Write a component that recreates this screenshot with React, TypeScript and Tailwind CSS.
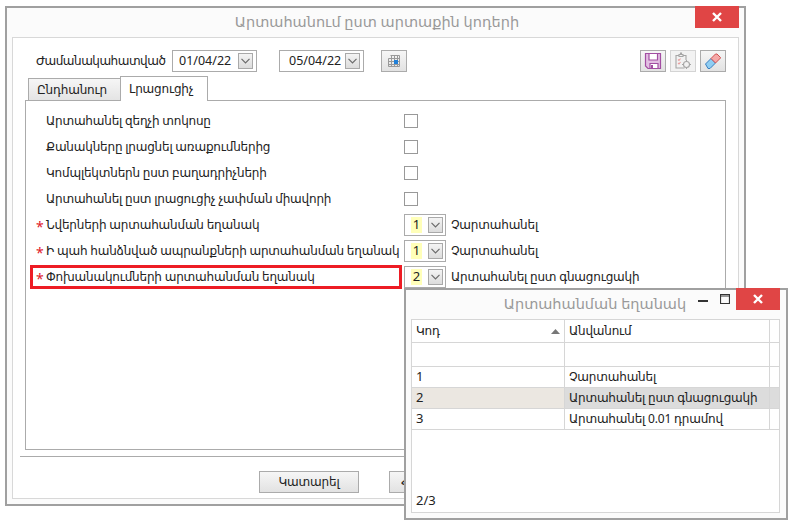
const font = 'font-["Noto_Sans","DejaVu_Sans",sans-serif]'
const hy = 'text-[12px] tracking-[-0.2px] whitespace-nowrap'

function Chevron() {
  return (
    <svg width="9" height="6" viewBox="0 0 9 6" fill="none" stroke="#6b6b6b" strokeWidth="1.2">
      <path d="M0.5 0.8 L4.5 4.8 L8.5 0.8" />
    </svg>
  )
}

function DropBtn() {
  return (
    <span className="flex h-[16px] w-[15px] shrink-0 items-center justify-center border border-[#a9a9a9] bg-gradient-to-b from-[#f4f4f4] to-[#dcdcdc]">
      <Chevron />
    </span>
  )
}

function CloseBtn({ className }: { className: string }) {
  return (
    <div className={className}>
      <svg width="10" height="10" viewBox="0 0 10 10" stroke="#fff" strokeWidth="2.4"><path d="M1 1 L9 9 M9 1 L1 9" /></svg>
    </div>
  )
}

function CodeSelect({ value, text }: { value: string; text: string }) {
  return (
    <div className="flex items-center">
      <div className="flex h-[22px] w-[42px] items-center border border-[#ababab] bg-white pl-[6px]">
        <span className="flex h-[16px] w-[11px] items-center justify-center bg-[#ffffb9] text-[13px]">{value}</span>
        <span className="ml-[6px]"><DropBtn /></span>
      </div>
      <span className={`ml-[5px] ${hy}`}>{text}</span>
    </div>
  )
}

function Row({ label, star, children }: { label: string; star?: boolean; children: React.ReactNode }) {
  return (
    <div className="relative flex h-[26px] items-center">
      {star && <span className="absolute left-[10px] top-[4px] text-[14px] text-[#e0202a]">*</span>}
      <span className={`w-[378px] pl-[20px] ${hy}`}>{label}</span>
      {children}
    </div>
  )
}

function Check() {
  return <span className="block h-[14px] w-[14px] border border-[#999] bg-white" />
}

function ToolBtn({ children, muted }: { children: React.ReactNode; muted?: boolean }) {
  return (
    <span className={muted ? 'flex h-[22px] w-[26px] items-center justify-center border border-[#d4d4d4] bg-[#f2f2f2]' : 'flex h-[22px] w-[26px] items-center justify-center border border-[#ababab] bg-gradient-to-b from-[#f6f6f6] to-[#e2e2e2]'}>
      {children}
    </span>
  )
}

function DateField({ value, wide }: { value: string; wide?: boolean }) {
  return (
    <div className={wide ? 'flex h-[22px] w-[85px] items-center justify-between border border-[#ababab] bg-white pl-[9px] pr-[3px]' : 'flex h-[22px] w-[85px] items-center justify-between border border-[#ababab] bg-white pl-[6px] pr-[3px]'}>
      <span className="text-[12.5px]">{value}</span>
      <DropBtn />
    </div>
  )
}

function PopupRow({ code, name, selected }: { code: string; name: string; selected?: boolean }) {
  return (
    <div className="flex h-[21px] border-b border-[#d6d6d6]">
      <span className={selected ? 'flex w-[153px] items-center border-r border-[#d6d6d6] bg-[#ebe7e1] pl-[4px] text-[13px]' : 'flex w-[153px] items-center border-r border-[#d6d6d6] pl-[4px] text-[13px]'}>{code}</span>
      <span className={selected ? `flex w-[205px] items-center border-r border-[#d6d6d6] bg-[#dcdcdc] pl-[4px] ${hy}` : `flex w-[205px] items-center border-r border-[#d6d6d6] pl-[4px] ${hy}`}>{name}</span>
      <span className={selected ? 'flex-1 bg-[#dcdcdc]' : 'flex-1'} />
    </div>
  )
}

export default function App() {
  return (
    <div className={`relative h-[523px] w-[792px] overflow-hidden bg-white text-[#222] ${font}`}>
      {/* main dialog */}
      <div className="ml-[5px] mt-[6px] h-[500px] w-[741px] border-2 border-[#a0a0a0] bg-[#fbfbfb]">
        <div className="flex h-[29px] items-start">
          <div className="flex h-[27px] flex-1 items-center justify-center whitespace-nowrap pl-[52px] text-[14.5px] text-[#999]">Արտահանում ըստ արտաքին կոդերի</div>
          <CloseBtn className="mr-[5px] -mt-[2px] flex h-[22px] w-[44px] items-center justify-center bg-[#e04545]" />
        </div>
        <div className="mx-[5px] h-[462px] border border-[#d8d8d8] bg-white pl-[12px] pr-[12px]">
          <div className="flex h-[34px] items-end pl-[11px]">
            <span className="flex h-[22px] w-[136px] items-center whitespace-nowrap text-[12px] tracking-[-0.5px]">Ժամանակահատված</span>
            <DateField value="01/04/22" />
            <span className="ml-[22px]"><DateField value="05/04/22" wide /></span>
            <span className="ml-[17px]">
              <ToolBtn>
                <svg width="14" height="14" viewBox="0 0 14 14" fill="none" stroke="#999" strokeWidth="1">
                  <path d="M3.5 1.5H12.5V12.5H1.5V4.5H12.5 M1.5 7.5H12.5 M1.5 10.5H12.5 M4.5 1.5V12.5 M7.5 1.5V12.5 M10.5 1.5V12.5" />
                  <rect x="7" y="6" width="4" height="4" fill="#1f7fd8" stroke="none" />
                </svg>
              </ToolBtn>
            </span>
            <div className="ml-auto flex gap-[4px]">
              <ToolBtn>
                <svg width="18" height="18" viewBox="0 0 18 18" fill="#e2bfe2" stroke="#a24ea2" strokeWidth="1.2">
                  <path d="M1.5 1.5H16.5V16.5H4L1.5 14Z" />
                  <path d="M5 1.5H13.5V8H5Z" fill="#fff" />
                  <path d="M6 11.5H14V16.5H6Z" fill="#fff" />
                  <rect x="7" y="13" width="2" height="3" fill="#a24ea2" stroke="none" />
                </svg>
              </ToolBtn>
              <ToolBtn muted>
                <svg width="18" height="18" viewBox="0 0 18 18" fill="none" stroke="#a6a6a6" strokeWidth="1.1">
                  <path d="M10.5 16H2V3.5H5M9 3.5H12V8" />
                  <path d="M5 4.5V2.5H6.5V1H7.5V2.5H9V4.5Z" />
                  <path d="M4 7.5L5 8.5L6.5 6.5M4 11L5 12L6.5 10" stroke="#e8a0a0" />
                  <circle cx="12.5" cy="12.5" r="3" />
                  <path d="M12.5 8V9.5M12.5 15.5V17M8 12.5H9.5M15.5 12.5H17" />
                </svg>
              </ToolBtn>
              <ToolBtn>
                <svg width="18" height="18" viewBox="0 0 18 18" stroke="#3a7fc0" strokeWidth="1">
                  <path d="M1.5 12L7 6.5L11.5 11L6 16.5H4Z" fill="#8fcdf2" />
                  <path d="M7 6.5L11.5 2H13L16.5 5.5V6L11.5 11Z" fill="#f5a8a8" stroke="#d05050" />
                </svg>
              </ToolBtn>
            </div>
          </div>
          <div className="flex h-[28px] items-end pl-[3px]">
            <span className={`flex h-[22px] w-[93px] items-center border border-b-0 border-[#ababab] bg-gradient-to-b from-[#f6f6f6] to-[#e4e4e4] pl-[8px] ${hy}`}>Ընդհանուր</span>
            <span className={`relative z-10 -mb-[1px] -ml-[1px] flex h-[25px] w-[88px] items-center border border-b-0 border-[#ababab] bg-white pl-[8px] ${hy}`}>Լրացուցիչ</span>
          </div>
          <div className="relative h-[350px] border border-[#ababab] pt-[7px]">
            <Row label="Արտահանել զեղչի տոկոսը"><Check /></Row>
            <Row label="Քանակները լրացնել առաքումներից"><Check /></Row>
            <Row label="Կոմպլեկտներն ըստ բաղադրիչների"><Check /></Row>
            <Row label="Արտահանել ըստ լրացուցիչ չափման միավորի"><Check /></Row>
            <Row star label="Նվերների արտահանման եղանակ"><CodeSelect value="1" text="Չարտահանել" /></Row>
            <Row star label="Ի պահ հանձնված ապրանքների արտահանման եղանակ"><CodeSelect value="1" text="Չարտահանել" /></Row>
            <Row star label="Փոխանակումների արտահանման եղանակ"><CodeSelect value="2" text="Արտահանել ըստ գնացուցակի" /></Row>
            {/* red highlight around the last label */}
            <span className="absolute left-[4px] top-[164px] h-[24px] w-[372px] border-[3px] border-[#ed1c24]" />
          </div>
          <div className="-mx-[5px] mt-[6px] h-[1px] bg-[#ababab]" />
          <div className="mt-[14px] flex gap-[30px] pl-[234px]">
            <span className={`flex h-[22px] w-[100px] items-center justify-center border border-[#ababab] bg-gradient-to-b from-[#f6f6f6] to-[#e2e2e2] ${hy}`}>Կատարել</span>
            <span className={`flex h-[22px] w-[100px] items-center border border-[#ababab] bg-gradient-to-b from-[#f6f6f6] to-[#e2e2e2] pl-[11px] ${hy}`}>Հրաժարվել</span>
          </div>
        </div>
      </div>

      {/* lookup popup floating over the dialog */}
      <div className="absolute left-[404px] top-[288px] h-[232px] w-[384px] border-2 border-[#a0a0a0] bg-[#fbfbfb]">
        <div className="flex h-[29px] items-start">
          <div className="flex h-[27px] flex-1 items-center justify-center whitespace-nowrap pl-[86px] text-[14.5px] text-[#999]">Արտահանման եղանակ</div>
          <svg className="mt-[10px]" width="10" height="2"><rect width="10" height="2" fill="#333" /></svg>
          <svg className="ml-[12px] mt-[4px]" width="10" height="10" fill="none" stroke="#333"><path d="M0.5 0.5H9.5V9.5H0.5Z M0 2H10" strokeWidth="1.2" /></svg>
          <CloseBtn className="ml-[6px] mr-[6px] -mt-[2px] flex h-[22px] w-[44px] items-center justify-center bg-[#e04545]" />
        </div>
        <div className="ml-[5px] flex h-[194px] w-[369px] flex-col border border-[#d6d6d6] bg-white">
          <div className="flex h-[23px] border-b border-[#d6d6d6]">
            <span className={`flex w-[153px] items-center justify-between border-r border-[#d6d6d6] pl-[4px] pr-[4px] ${hy}`}>
              Կոդ
              <svg width="9" height="5"><path d="M0 5L4.5 0L9 5Z" fill="#777" /></svg>
            </span>
            <span className={`flex w-[205px] items-center border-r border-[#d6d6d6] pl-[4px] ${hy}`}>Անվանում</span>
          </div>
          <div className="flex h-[24px] border-b border-[#d6d6d6]">
            <span className="w-[153px] border-r border-[#d6d6d6]" />
            <span className="w-[205px] border-r border-[#d6d6d6]" />
          </div>
          <PopupRow code="1" name="Չարտահանել" />
          <PopupRow code="2" name="Արտահանել ըստ գնացուցակի" selected />
          <PopupRow code="3" name="Արտահանել 0.01 դրամով" />
          <div className="mt-auto pb-[2px] pl-[4px] text-[13px]">2/3</div>
        </div>
      </div>
    </div>
  )
}
